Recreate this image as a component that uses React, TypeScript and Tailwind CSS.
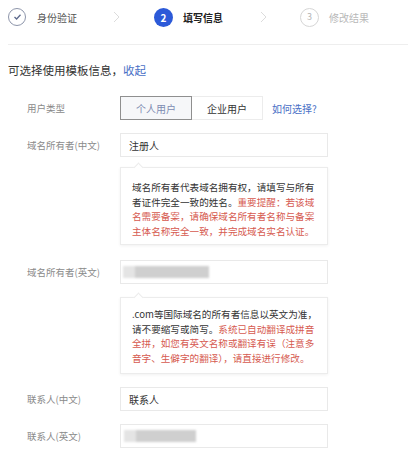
import React from "react";

const font = { fontFamily: '"Noto Sans CJK SC", "Noto Sans", sans-serif' };

function Chevron() {
  return (
    <svg width="7" height="12" viewBox="0 0 7 12" className="shrink-0">
      <polyline points="1,1 6,6 1,11" fill="none" stroke="#dcdcdc" strokeWidth="1" />
    </svg>
  );
}

function Steps() {
  return (
    <div className="flex h-[34px] items-center">
      <div className="flex h-[18px] w-[18px] items-center justify-center rounded-full border border-[#8d95aa]">
        <svg width="9" height="8" viewBox="0 0 9 8">
          <polyline points="1.5,4 3.6,6 7.5,1.8" fill="none" stroke="#5d6a8c" strokeWidth="1.3" />
        </svg>
      </div>
      <span className="ml-[11px] text-[10px] text-[#555]">身份验证</span>
      <div className="ml-[36px]">
        <Chevron />
      </div>
      <div className="ml-[34px] flex h-[19px] w-[19px] items-center justify-center rounded-full bg-[#2c5ad8] text-[10px] font-bold text-white">
        2
      </div>
      <span className="ml-[10px] text-[10px] font-bold text-[#222]">填写信息</span>
      <div className="ml-[37px]">
        <Chevron />
      </div>
      <div className="ml-[33px] flex h-[19px] w-[19px] items-center justify-center rounded-full border border-[#d6d6d6] text-[9px] text-[#b5b5b5]">
        3
      </div>
      <span className="ml-[10px] text-[10px] text-[#b8b8b8]">修改结果</span>
    </div>
  );
}

function Label({ children }: { children: React.ReactNode }) {
  return (
    <div className="w-[112px] shrink-0 pl-[19px] text-[9.5px] text-[#8a8a8a]">{children}</div>
  );
}

function Blurred({ width }: { width: number }) {
  return (
    <div className="flex h-[12px] blur-[1px]">
      <div className="w-[12px] bg-[#e4e4e4]" />
      <div className="bg-[#cfcfcf]" style={{ width: width - 12 }} />
    </div>
  );
}

function Field({ label, children, className }: { label: string; children: React.ReactNode; className: string }) {
  return (
    <div className={`flex items-center ${className}`}>
      <Label>{label}</Label>
      <div className="flex h-[24px] w-[208px] items-center border border-[#e9e9e9] bg-white pl-[8px] text-[10px] text-[#333]">
        {children}
      </div>
    </div>
  );
}

function Tip({ children, className }: { children: React.ReactNode; className: string }) {
  return (
    <div className="flex">
      <div className="w-[112px] shrink-0" />
      <div
        className={`relative w-[208px] border border-[#ececec] bg-white pl-[11px] shadow-[0_1px_3px_rgba(0,0,0,0.06)] ${className}`}
      >
        <div className="absolute -top-[4px] left-[14px] h-[7px] w-[7px] rotate-45 border-l border-t border-[#ececec] bg-white" />
        <div className="w-[190px] whitespace-nowrap text-[9.6px] leading-[14.5px] text-[#333]">{children}</div>
      </div>
    </div>
  );
}

const red = "text-[#d65a50]";

export default function App() {
  return (
    <div className="min-h-[459px] w-[416px] bg-white px-2" style={font}>
      <Steps />
      <div className="mt-[10px] h-px bg-[#eeeeee]" />
      <div className="mt-[17px] h-[16px] text-[11.5px] leading-[16px] text-[#333]">
        可选择使用模板信息，<span className="text-[#4a70c6]">收起</span>
      </div>

      <div className="mt-[18px] flex items-center">
        <Label>用户类型</Label>
        <div className="flex h-[24px] w-[72px] items-center justify-center border border-[#8f8f8f] bg-[#f6f7f9] text-[10px] text-[#7d8bb2]">
          个人用户
        </div>
        <div className="flex h-[24px] w-[71px] items-center justify-center border border-l-0 border-[#ececec] text-[10px] text-[#333]">
          企业用户
        </div>
        <span className="ml-[9px] text-[10px] text-[#4a70c6]">如何选择?</span>
      </div>

      <Field label="域名所有者(中文)" className="mt-[13px]">
        注册人
      </Field>

      <div className="mt-[10px]">
        <Tip className="h-[78px] pt-[12px]">
          <div>域名所有者代表域名拥有权，请填写与所有</div>
          <div>
            者证件完全一致的姓名。<span className={red}>重要提醒：若该域</span>
          </div>
          <div className={red}>名需要备案，请确保域名所有者名称与备案</div>
          <div className={red}>主体名称完全一致，并完成域名实名认证。</div>
        </Tip>
      </div>

      <Field label="域名所有者(英文)" className="mt-[15px]">
        <div className="-ml-[6px]">
          <Blurred width={86} />
        </div>
      </Field>

      <div className="mt-[13px]">
        <Tip className="h-[77px] pt-[9px]">
          <div>.com等国际域名的所有者信息以英文为准，</div>
          <div>
            请不要缩写或简写。<span className={red}>系统已自动翻译成拼音</span>
          </div>
          <div className={red}>全拼，如您有英文名称或翻译有误（注意多</div>
          <div className={red}>音字、生僻字的翻译），请直接进行修改。</div>
        </Tip>
      </div>

      <Field label="联系人(中文)" className="mt-[13px]">
        联系人
      </Field>

      <Field label="联系人(英文)" className="mt-[13px]">
        <div className="-ml-[5px]">
          <Blurred width={72} />
        </div>
      </Field>
    </div>
  );
}
